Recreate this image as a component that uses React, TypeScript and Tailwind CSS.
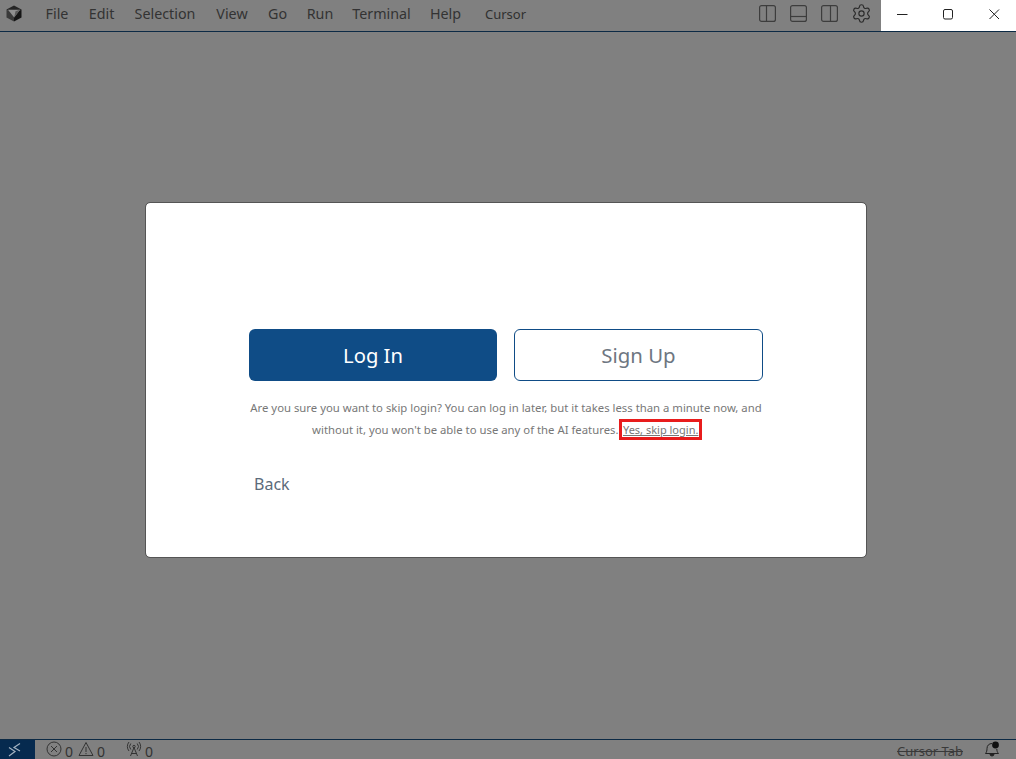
import React from "react";
import { Settings } from "lucide-react";

const ui = "font-['Noto_Sans','Open_Sans',sans-serif]";

function Cube() {
  return (
    <svg width="16" height="17" viewBox="0 0 16 17">
      <path d="M8 0.5 15.5 4.5 8 9 0.5 4.5Z" fill="#262626" />
      <path d="M0.5 4.5 8 9v7.5L0.5 12.5Z" fill="#3a3a3a" />
      <path d="M15.5 4.5 8 9v7.5l7.5-4Z" fill="#151515" />
      <path d="M2 4.8 14 4.8 8.2 12.5Z" fill="#8f8f8f" />
      <path d="M8.2 12.5 14 4.8 9.5 6.2Z" fill="#5a5a5a" />
    </svg>
  );
}

function Panel({ kind }: { kind: "left" | "bottom" | "right" }) {
  return (
    <svg width="17" height="17" viewBox="0 0 17 17" fill="none" stroke="#3d3d3d" strokeWidth="1.2">
      <rect x="0.6" y="0.6" width="15.8" height="15.8" rx="2" />
      {kind === "left" && <path d="M7.5 0.6v15.8" />}
      {kind === "right" && <path d="M9.5 0.6v15.8" />}
      {kind === "bottom" && <path d="M0.6 11.5h15.8" />}
    </svg>
  );
}

function Remote() {
  return (
    <svg width="16" height="16" viewBox="0 0 16 16" fill="none" stroke="#a4b3c2" strokeWidth="1.2">
      <path d="M2 6.5 8 10.5 2 15" />
      <path d="M13 2.5 7 6.5l6 3.5" />
    </svg>
  );
}

function ErrorIcon() {
  return (
    <svg width="16" height="16" viewBox="0 0 16 16" fill="none" stroke="#333" strokeWidth="1">
      <circle cx="8" cy="8" r="7" />
      <path d="M5 5l6 6M11 5l-6 6" />
    </svg>
  );
}

function WarnIcon() {
  return (
    <svg width="16" height="16" viewBox="0 0 16 16" fill="none" stroke="#333" strokeWidth="1">
      <path d="M8 1.5 15 14.5H1Z" />
      <path d="M8 6v5M8 12v1.2" />
    </svg>
  );
}

function Radio() {
  return (
    <svg width="16" height="16" viewBox="0 0 16 16" fill="none" stroke="#333" strokeWidth="1">
      <circle cx="8" cy="5.5" r="1.2" />
      <path d="M8 6.5 4.5 15M8 6.5 11.5 15M5.5 12.5h5" />
      <path d="M4.8 8.5a4.5 4.5 0 0 1 0-6M11.2 8.5a4.5 4.5 0 0 0 0-6M3 10a7 7 0 0 1 0-9M13 10a7 7 0 0 0 0-9" />
    </svg>
  );
}

function Bell() {
  return (
    <svg width="16" height="16" viewBox="0 0 16 16" fill="none" stroke="#222" strokeWidth="1">
      <path d="M1.5 12.5c1.2-1.5 1.5-3 1.5-5 0-3 2-5 5-5M12.8 8c.1 2 .5 3.2 1.7 4.5h-13" />
      <path d="M6 13a2 2 0 0 0 4 0Z" fill="#222" />
      <circle cx="11.5" cy="4" r="3.4" fill="#111" stroke="none" />
    </svg>
  );
}

export default function App() {
  const menus = [
    ["File", "w-[42px]"],
    ["Edit", "w-[47px]"],
    ["Selection", "w-[80px]"],
    ["View", "w-[54px]"],
    ["Go", "w-[37px]"],
    ["Run", "w-[48px]"],
    ["Terminal", "w-[75px]"],
    ["Help", "w-[53px]"],
  ];
  return (
    <div className={`${ui} w-[1016px] h-[759px] flex flex-col overflow-hidden bg-[#808080]`}>
      <header className="h-[32px] flex border-b border-[#0c2a45] shrink-0">
        <div className="w-[36px] h-[31px] flex items-start pl-[6px] pt-[5px]">
          <Cube />
        </div>
        <nav className="flex items-center h-[27px] text-[14.3px] text-[#333333]">
          {menus.map(([m, w]) => (
            <span key={m} className={`${w} text-center`}>{m}</span>
          ))}
        </nav>
        <span className="ml-[13px] mt-[6px] text-[13px] leading-[17px] text-[#303030]">Cursor</span>
        <div className="ml-auto flex items-start gap-[14px] pr-[9px] pt-[5px]">
          <Panel kind="left" />
          <Panel kind="bottom" />
          <Panel kind="right" />
          <Settings size={21} strokeWidth={1.3} color="#2a2a2a" className="-mt-[2px] -ml-[1px]" />
        </div>
        <div className="w-[135px] h-[31px] bg-white flex items-center text-[#222]">
          <svg width="135" height="31" viewBox="0 0 135 31" fill="none" stroke="#222" strokeWidth="1">
            <path d="M16 14.5h10.5" />
            <rect x="62.5" y="9.5" width="9" height="9.5" rx="1.5" />
            <path d="M108.5 9.5l9.5 9.5M118 9.5l-9.5 9.5" />
          </svg>
        </div>
      </header>

      <main className="flex-1 flex items-start pt-[171px] pl-[146px]">
        <section className="w-[720px] h-[354px] bg-white rounded-[4px] outline outline-1 outline-[#555] flex flex-col pt-[126px] pl-[103px] pr-[103px]">
          <div className="flex justify-between">
            <button className="w-[248px] h-[52px] pt-[1px] rounded-[6px] bg-[#0f4c86] text-white text-[20.2px]">Log In</button>
            <button className="w-[249px] h-[52px] pt-[1px] rounded-[6px] border border-[#0f4c86] bg-white text-[#6e7681] text-[20.4px]">Sign Up</button>
          </div>
          <p className="mt-[16px] whitespace-nowrap text-center text-[11.34px] leading-[22px] text-[#777777]">
            Are you sure you want to skip login? You can log in later, but it takes less than a minute now, and
            <br />
            without it, you won't be able to use any of the AI features.{" "}
            <span className="underline text-[11px] outline outline-[3px] outline-[#e81c1c] -outline-offset-[1px] px-[1.5px] py-[1px]">Yes, skip login.</span>
          </p>
          <div className="mt-[32px] pl-[5px] text-[16px] leading-[22px] text-[#5b6b7a]">Back</div>
        </section>
      </main>

      <footer className="h-[20px] flex items-stretch border-t border-[#0c2a45] shrink-0 text-[14px] leading-[14px] text-[#333]">
        <div className="w-[35px] bg-[#062a4f] flex items-start pl-[7px] pt-[1px]">
          <Remote />
        </div>
        <div className="flex items-start pl-[11px] pt-[1px]">
          <ErrorIcon /><span className="ml-[3px] mt-[4px]">0</span>
          <span className="ml-[5px]"><WarnIcon /></span><span className="ml-[3px] mt-[4px]">0</span>
          <span className="ml-[21px]"><Radio /></span><span className="ml-[3px] mt-[4px]">0</span>
        </div>
        <div className="ml-auto flex items-start pr-[16px]">
          <span className="line-through text-[#3a3a3a] text-[13px] leading-[14px] mt-[4px]">Cursor Tab</span>
          <span className="ml-[21px] mt-[1px]"><Bell /></span>
        </div>
      </footer>
    </div>
  );
}
